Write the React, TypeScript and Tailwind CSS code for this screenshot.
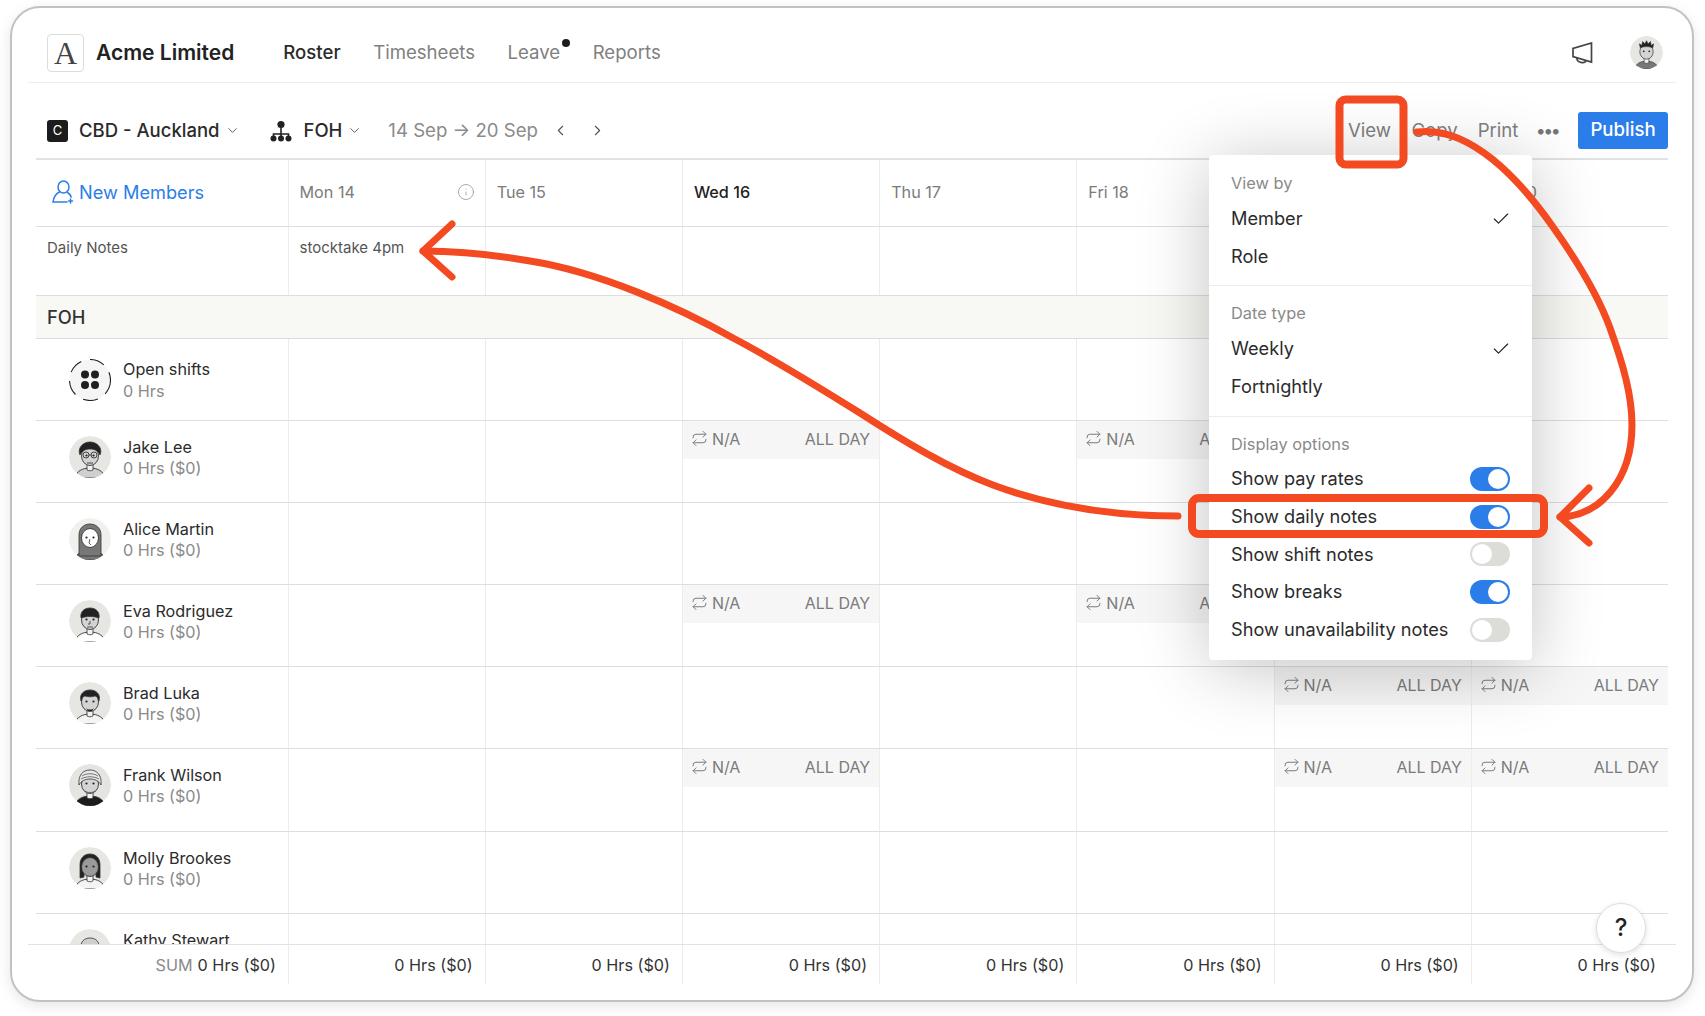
import React from 'react';
import { ChevronDown, ChevronLeft, ChevronRight, Check, Repeat, Info } from 'lucide-react';

const days = ['Mon 14', 'Tue 15', 'Wed 16', 'Thu 17', 'Fri 18', 'Sat 19', 'Sun 20'];

type Look = {
  hair: string;
  body?: string;
  skin?: string;
  extra?: React.ReactNode;
  bg?: string;
};

const looks: Record<string, Look> = {
  jake: {
    hair: 'M11 19c-3-7 3-13 10-13s13 6 10 13c-2-4-5-6-10-6s-8 2-10 6z',
    body: '#cfcfcf',
    extra: (
      <g fill="none" stroke="#333" strokeWidth="0.9">
        <circle cx="17" cy="19" r="3" />
        <circle cx="25" cy="19" r="3" />
        <path d="M20 19h2M18 27h6" />
      </g>
    ),
  },
  alice: {
    hair: 'M10 38V17c0-7 5-11 11-11s11 4 11 11v21z',
    body: '#777',
    bg: '#f0f0ec',
    skin: '#fff',
    extra: <path d="M21 21l-1 4 2 2" fill="none" stroke="#333" strokeWidth="0.8" />,
  },
  eva: {
    hair: 'M12 18c-1-6 3-10 9-10s10 4 9 10c-5-2-13-2-18 0z',
    body: '#fff',
    extra: <path d="M21 21v3h-2M18 27h6" fill="none" stroke="#333" strokeWidth="0.8" />,
  },
  brad: {
    hair: 'M12 19c-2-7 3-11 9-11s11 4 9 11c-1-3-2-5-4-5-3 1-7 1-10 0-2 0-3 2-4 5z',
    body: '#f4f4f2',
    extra: <path d="M17 26c2 2 6 2 8 0l-2 3h-4z" fill="#222" />,
  },
  frank: {
    hair: 'M10 21C9 11 14 6 21 6s12 5 11 15c-2-4-6-6-11-6s-9 2-11 6z',
    body: '#1c1c1c',
    bg: '#e4e4e0',
    extra: <path d="M13 12c4-3 12-3 16 0M12 15c5-3 13-3 18 0M16 27c3 2 7 2 10 0" fill="none" stroke="#555" strokeWidth="0.8" />,
  },
  molly: {
    hair: 'M11 31V18c0-7 4-11 10-11s10 4 10 11v13l-4-1V17c-3 0-9-1-12 0v13z',
    body: '#f4f4f2',
    skin: '#9a9a9a',
  },
  kathy: {
    hair: 'M12 20c-1-7 3-11 9-11s10 4 9 11c-4-3-14-3-18 0z',
    skin: '#e0e0e0',
  },
  me: {
    hair: 'M13 15l-1-5 3 2 1-5 3 3 2-4 2 4 3-3 1 5 3-2-1 5c-5-2-11-2-16 0z',
    body: '#777',
  },
};

function hairColor(who: string) {
  if (who === 'frank') return '#e8e8e8';
  if (who === 'kathy') return '#cfcfcf';
  if (who === 'alice') return '#777';
  return '#222';
}

function Avatar({ who, size = 42 }: { who: string; size?: number }) {
  const look = looks[who];
  const behind = who === 'alice' || who === 'molly';
  return (
    <svg width={size} height={size} viewBox="0 0 42 42" className="shrink-0 rounded-full">
      <circle cx="21" cy="21" r="21" fill={look.bg ?? '#e6e6e2'} />
      <path d="M6 42c1-7 8-10 15-10s14 3 15 10z" fill={look.body ?? '#fff'} stroke="#333" strokeWidth="0.9" />
      <path d="M18 27h6v7c-2 1-4 1-6 0z" fill="#f1f1f1" stroke="#333" strokeWidth="0.8" />
      {behind ? <path d={look.hair} fill={hairColor(who)} stroke="#333" strokeWidth="0.8" /> : null}
      <ellipse cx="21" cy="20" rx="8.5" ry="9.5" fill={look.skin ?? '#d4d4d4'} stroke="#333" strokeWidth="0.9" />
      {behind ? null : <path d={look.hair} fill={hairColor(who)} stroke="#333" strokeWidth="0.8" />}
      <circle cx="17.5" cy="19.5" r="1.1" fill="#222" />
      <circle cx="24.5" cy="19.5" r="1.1" fill="#222" />
      {look.extra}
    </svg>
  );
}

function OpenShiftsIcon() {
  return (
    <svg width="42" height="42" viewBox="0 0 42 42" className="shrink-0">
      <circle cx="21" cy="21" r="20.5" fill="#f5f5f5" stroke="#222" strokeWidth="1.1" strokeDasharray="15 9" />
      <circle cx="16" cy="15.500" r="4" fill="#1f1f1f" />
      <circle cx="26" cy="15.500" r="4" fill="#1f1f1f" />
      <circle cx="16" cy="26" r="4" fill="#1f1f1f" />
      <circle cx="26" cy="26" r="4" fill="#1f1f1f" />
    </svg>
  );
}

function OrgIcon() {
  return (
    <svg width="22" height="22" viewBox="0 0 22 22" className="shrink-0">
      <circle cx="11" cy="4.5" r="3.6" fill="#222" />
      <path d="M11 7v7M3.5 17v-3h15v3M11 14v3" fill="none" stroke="#222" strokeWidth="1.6" />
      <circle cx="3.5" cy="18.5" r="3" fill="#222" />
      <circle cx="11" cy="18.5" r="3" fill="#222" />
      <circle cx="18.5" cy="18.5" r="3" fill="#222" />
    </svg>
  );
}

function NewMemberIcon() {
  return (
    <svg width="22" height="24" viewBox="0 0 22 24" fill="none" stroke="#2b7de9" strokeWidth="1.5" strokeLinecap="round" className="shrink-0">
      <ellipse cx="11.5" cy="7" rx="5.5" ry="6" />
      <path d="M7.5 12c-3 1.5-6 5-6.500 10h14" />
      <path d="M15.500 12.500c1.800 1 3 2.600 3.700 4.500M18.500 19v4M16.500 21h4" />
    </svg>
  );
}

function Megaphone() {
  return (
    <svg width="22" height="22" viewBox="0 0 22 22" fill="none" stroke="#444" strokeWidth="1.7" className="shrink-0">
      <path d="M20.500 1v19L2 14.500v-8z" />
      <path d="M6 16c-.5 5 8 6 9 2.500" />
    </svg>
  );
}

function Toggle({ on }: { on: boolean }) {
  return (
    <div className={on ? 'w-10 h-6 rounded-full bg-[#2b7de9] flex items-center justify-end px-0.5' : 'w-10 h-6 rounded-full bg-[#dcdcd8] flex items-center justify-start px-0.5'}>
      <div className="w-5 h-5 rounded-full bg-white" />
    </div>
  );
}

function NACell() {
  return (
    <div className="h-[38px] bg-[#f6f6f6] flex items-center justify-between pl-[8px] pr-[9px] pb-[3px] text-[16px] text-[#7b7b7b]">
      <div className="flex items-center gap-[4px]">
        <Repeat size={17} strokeWidth={1.4} />
        <span>N/A</span>
      </div>
      <span>ALL DAY</span>
    </div>
  );
}

const members = [
  { name: 'Open shifts', sub: '0 Hrs', who: '', na: [] as number[] },
  { name: 'Jake Lee', sub: '0 Hrs ($0)', who: 'jake', na: [2, 4] },
  { name: 'Alice Martin', sub: '0 Hrs ($0)', who: 'alice', na: [] },
  { name: 'Eva Rodriguez', sub: '0 Hrs ($0)', who: 'eva', na: [2, 4] },
  { name: 'Brad Luka', sub: '0 Hrs ($0)', who: 'brad', na: [5, 6] },
  { name: 'Frank Wilson', sub: '0 Hrs ($0)', who: 'frank', na: [2, 5, 6] },
  { name: 'Molly Brookes', sub: '0 Hrs ($0)', who: 'molly', na: [] },
  { name: 'Kathy Stewart', sub: '0 Hrs ($0)', who: 'kathy', na: [] },
];

const grid = 'grid grid-cols-[251.5px_repeat(7,1fr)]';

function MenuItem({ label, checked }: { label: string; checked?: boolean }) {
  return (
    <div className="h-[38px] flex items-center justify-between pl-[22px] pr-[21px] text-[18.2px] text-[#2b2b2b]">
      <span>{label}</span>
      {checked ? <Check size={20} strokeWidth={1.4} className="text-[#222]" /> : null}
    </div>
  );
}

function ViewMenu() {
  const toggles = [
    { label: 'Show pay rates', on: true },
    { label: 'Show daily notes', on: true },
    { label: 'Show shift notes', on: false },
    { label: 'Show breaks', on: true },
    { label: 'Show unavailability notes', on: false },
  ];
  return (
    <div className="absolute left-[1209px] top-[155px] w-[323px] h-[505px] bg-white rounded-[4px] shadow-[0_8px_70px_rgba(0,0,0,0.24)]">
      <div className="pt-[17px] pb-[9.5px] border-b border-[#ececec]">
        <div className="h-[22px] leading-[22px] pl-[22px] text-[16.4px] text-[#8a8a8a]">View by</div>
        <div className="mt-[5.5px]">
          <MenuItem label="Member" checked />
          <MenuItem label="Role" />
        </div>
      </div>
      <div className="pt-[16px] pb-[10px] border-b border-[#ececec]">
        <div className="h-[22px] leading-[22px] pl-[22px] text-[16.4px] text-[#8a8a8a]">Date type</div>
        <div className="mt-[6px]">
          <MenuItem label="Weekly" checked />
          <MenuItem label="Fortnightly" />
        </div>
      </div>
      <div className="pt-[16px]">
        <div className="h-[22px] leading-[22px] pl-[22px] text-[16.4px] text-[#8a8a8a]">Display options</div>
        <div className="mt-[5px]">
          {toggles.map((t) => (
            <div key={t.label} className="h-[37.75px] flex items-center justify-between pl-[22px] pr-[22px] text-[18.2px] text-[#2b2b2b]">
              <span>{t.label}</span>
              <Toggle on={t.on} />
            </div>
          ))}
        </div>
      </div>
    </div>
  );
}

function Annotations() {
  return (
    <svg width="1705" height="1016" viewBox="0 0 1705 1016" fill="none" stroke="#f44a22" strokeWidth="7" strokeLinecap="round" strokeLinejoin="round" className="absolute left-0 top-0 pointer-events-none">
      <rect x="1339.500" y="99.500" width="64" height="65" rx="6" strokeWidth="8" />
      <rect x="1192" y="498" width="352" height="36" rx="7" strokeWidth="8" />
      <path d="M1178 516C1130 516 1060 510 993 485C950 469 905 442 860 413C820 388 775 360 733 338C680 308 600 272 530 261C490 254 455 251 423 251" />
      <path d="M452 224L423 251L452 277" />
      <path d="M1417 132C1470 125 1520 180 1553 227C1575 258 1597 292 1610 328C1623 364 1632 395 1632 425C1632 480 1600 516 1560 517" />
      <path d="M1589 488L1560 517L1589 543" />
    </svg>
  );
}

export default function App() {
  return (
    <div className="relative w-[1705px] h-[1016px] overflow-hidden bg-white font-['Inter',sans-serif] text-[#2b2b2b]">
      <div className="ml-[10px] mt-[6px] w-[1684px] h-[996px] border-2 border-[#c2c2c2] rounded-[30px] shadow-[0_4px_14px_rgba(0,0,0,0.10)] flex flex-col overflow-hidden bg-white">
        {/* top nav */}
        <div className="mx-[16px] h-[75px] shrink-0 border-b border-[#ececec] pt-[15px] pl-[19px] pr-[13px] flex items-center">
          <div className="w-[37px] h-[38px] border border-[#dcdcdc] rounded-[4px] flex items-center justify-center font-['Liberation_Serif',serif] text-[32px] text-[#444]">A</div>
          <div className="ml-[12px] text-[21px] font-semibold text-[#222]">Acme Limited</div>
          <div className="ml-[49px] flex items-center gap-[32.5px] text-[18.6px] text-[#808080]">
            <span className="font-medium text-[#2b2b2b]">Roster</span>
            <span>Timesheets</span>
            <span className="relative">
              Leave
              <span className="absolute -right-[10px] top-0 w-2 h-2 rounded-full bg-[#1c1c1c]" />
            </span>
            <span>Reports</span>
          </div>
          <div className="ml-auto flex items-center gap-[37px]">
            <Megaphone />
            <Avatar who="me" size={33} />
          </div>
        </div>

        {/* toolbar */}
        <div className="mx-[24px] h-[74.5px] shrink-0 pt-[21px] flex items-center">
          <div className="ml-[11px] w-[21px] h-[22px] rounded-[3px] bg-[#1c1c1c] text-white text-[13px] flex items-center justify-center">C</div>
          <span className="ml-[11px] text-[18.5px] font-medium">CBD - Auckland</span>
          <ChevronDown size={15} strokeWidth={1.5} className="ml-[6px] text-[#555]" />
          <div className="ml-[30px]"><OrgIcon /></div>
          <span className="ml-[11px] text-[18.5px] font-medium">FOH</span>
          <ChevronDown size={15} strokeWidth={1.5} className="ml-[5px] text-[#555]" />
          <span className="ml-[26px] text-[18.6px] text-[#8a8a8a]">14 Sep → 20 Sep</span>
          <ChevronLeft size={17} strokeWidth={1.6} className="ml-[14px] text-[#555]" />
          <ChevronRight size={17} strokeWidth={1.6} className="ml-[20px] text-[#555]" />
          <div className="ml-auto flex items-center text-[18.6px] text-[#808080]">
            <span>View</span>
            <span className="ml-[20.5px]">Copy</span>
            <span className="ml-[20px]">Print</span>
            <span className="ml-[18px] tracking-[-1px] text-[#777] text-[18px] font-bold">•••</span>
            <div className="ml-[19px] w-[90px] h-[37px] -mt-[1px] rounded-[3px] bg-[#2b7de9] text-white font-medium flex items-center justify-center">Publish</div>
          </div>
        </div>

        {/* roster table */}
        <div className="mx-[24px] flex-1 min-h-0 overflow-hidden">
          <div className={grid + ' h-[69.5px] border-t-2 border-b border-t-[#e2e2e2] border-b-[#dedede]'}>
            <div className="pl-[16px] flex items-center gap-[5px] text-[18.2px] text-[#2b7de9] pb-[1px]">
              <NewMemberIcon />
              <span>New Members</span>
            </div>
            {days.map((d, i) => (
              <div key={d} className={i === 2 ? 'border-l border-[#ececec] pl-[11px] flex items-center text-[16.2px] font-medium text-[#222] pb-[1.5px]' : 'border-l border-[#ececec] pl-[11px] pr-[10px] flex items-center justify-between text-[16.2px] text-[#7b7b7b] pb-[1.5px]'}>
                <span>{d}</span>
                {i === 0 ? <Info size={18} strokeWidth={1.1} className="text-[#999]" /> : null}
              </div>
            ))}
          </div>
          <div className={grid + ' h-[69px] border-b border-[#dedede] text-[15px] text-[#555]'}>
            <div className="pl-[11px] pt-[10px]">Daily Notes</div>
            {days.map((d, i) => (
              <div key={d} className="border-l border-[#ececec] pl-[11px] pt-[10px]">
                {i === 0 ? 'stocktake 4pm' : ''}
              </div>
            ))}
          </div>
          <div className="h-[43px] bg-[#f8f8f4] border-b border-[#dcdcdc] pl-[11px] pt-[2px] flex items-center text-[18.3px] font-medium text-[#333]">FOH</div>
          {members.map((m, idx) => (
            <div key={m.name} className={grid + ' h-[82.1px] border-b border-[#dedede]'}>
              <div className={idx === 0 ? 'pl-[33px] pt-[20px] flex gap-[12px]' : 'pl-[33px] pt-[15px] flex gap-[12px]'}>
                {idx === 0 ? <OpenShiftsIcon /> : <Avatar who={m.who} />}
                <div className={idx === 0 ? 'mt-0' : 'pt-[1px]'}>
                  <div className="text-[16.2px] leading-[21px] text-[#2b2b2b]">{m.name}</div>
                  <div className={idx === 0 ? 'text-[16.2px] leading-[21px] mt-[1px] text-[#8a8a8a]' : 'text-[16.2px] leading-[21px] text-[#8a8a8a]'}>{m.sub}</div>
                </div>
              </div>
              {days.map((d, i) => (
                <div key={d} className="border-l border-[#ececec]">
                  {m.na.includes(i) ? <NACell /> : null}
                </div>
              ))}
            </div>
          ))}
        </div>

        {/* totals */}
        <div className="mx-[16px] h-[56px] shrink-0 border-t border-[#e2e2e2] px-[8px]">
          <div className={grid + ' h-[39px] text-[16.2px] text-[#333]'}>
            <div className="pr-[11.5px] pt-[1px] flex items-center justify-end gap-[5px]">
              <span className="text-[#8a8a8a]">SUM</span>
              <span>0 Hrs ($0)</span>
            </div>
            {days.map((d) => (
              <div key={d} className="border-l border-[#ececec] pr-[12px] pt-[1px] flex items-center justify-end">0 Hrs ($0)</div>
            ))}
          </div>
        </div>
      </div>

      <div className="absolute left-[1596px] top-[903px] w-[50px] h-[50px] rounded-full bg-white border border-[#dedede] shadow-[0_2px_6px_rgba(0,0,0,0.12)] flex items-center justify-center text-[24px] font-medium text-[#222]">?</div>

      <ViewMenu />
      <Annotations />
    </div>
  );
}
